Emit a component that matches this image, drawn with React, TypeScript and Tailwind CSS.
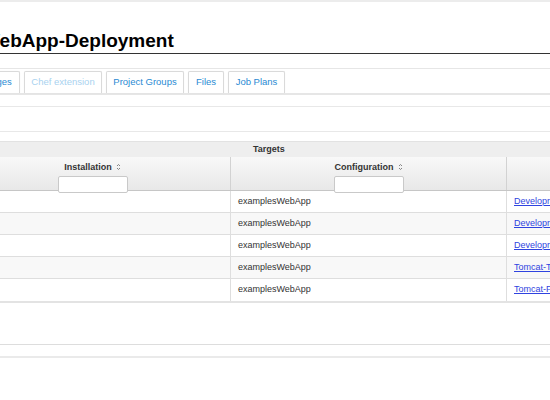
import React from "react";

type Row = {
  configuration: string;
  target: string;
};

const rows: Row[] = [
  { configuration: "examplesWebApp", target: "Development-Server-1" },
  { configuration: "examplesWebApp", target: "Development-Server-2" },
  { configuration: "examplesWebApp", target: "Development-Server-3" },
  { configuration: "examplesWebApp", target: "Tomcat-Test" },
  { configuration: "examplesWebApp", target: "Tomcat-Production" },
];

const tabs = [
  { label: "Stages", width: "w-[46px]", disabled: false },
  { label: "Chef extension", width: "w-[78px]", disabled: true },
  { label: "Project Groups", width: "w-[78px]", disabled: false },
  { label: "Files", width: "w-[36px]", disabled: false },
  { label: "Job Plans", width: "w-[57px]", disabled: false },
];

function SortIcon() {
  return (
    <svg width="5" height="8" viewBox="0 0 5 8" className="ml-[4px] inline-block">
      <path d="M1 3 L2.5 1.5 L4 3" fill="none" stroke="#777" strokeWidth="0.9" />
      <path d="M1 5 L2.5 6.5 L4 5" fill="none" stroke="#777" strokeWidth="0.9" />
    </svg>
  );
}

function HeaderCell({ title, className }: { title: string; className: string }) {
  return (
    <div className={`flex flex-col items-center pt-[5px] ${className}`}>
      <div className="flex items-center text-[9px] font-bold leading-[10px] text-[#333]">
        {title}
        <SortIcon />
      </div>
      <input
        type="text"
        className="mt-[4px] h-[17px] w-[70px] rounded-[2px] border border-[#c9c9c9] bg-white"
      />
    </div>
  );
}

export default function App() {
  return (
    <div className="h-[400px] w-[550px] overflow-hidden bg-white font-['Liberation_Sans',Arial,sans-serif]">
      <div className="h-[2px] bg-[#ececec]" />

      <div className="flex h-[52px] items-end border-b border-[#333] pb-[3px]">
        <h1 className="-ml-[18px] whitespace-nowrap text-[19px] font-bold leading-[19px] text-black">
          WebApp-Deployment
        </h1>
      </div>

      <div className="mt-[14px] border-t border-b-2 border-[#e6e6e6] pt-[2px]">
        <div className="-ml-[26px] flex gap-[4px]">
          {tabs.map((tab) => (
            <div
              key={tab.label}
              className={`flex h-[22px] shrink-0 items-center justify-center rounded-t-[2px] border border-b-0 border-[#dadada] bg-white text-[9.5px] whitespace-nowrap shadow-[0_0_1px_rgba(0,0,0,0.08)] ${tab.width} ${
                tab.disabled ? "text-[#a9d2ef]" : "text-[#2a8ad3]"
              }`}
            >
              {tab.label}
            </div>
          ))}
        </div>
      </div>

      <div className="mt-[11px] h-[26px] border-y border-[#e8e8e8]" />

      <div className="mt-[9px]">
        <div className="flex h-[16px] items-center border-t border-[#e2e2e2] bg-[#eeeeee] pl-[253px] text-[9px] font-bold text-[#333]">
          Targets
        </div>

        <div className="-ml-[45px]">
          <div className="flex h-[34px] border-b border-[#c6c6c6] bg-gradient-to-b from-[#f8f8f8] to-[#e8e8e8]">
            <HeaderCell title="Installation" className="w-[276px] shrink-0 border-r border-[#d2d2d2]" />
            <HeaderCell title="Configuration" className="w-[276px] shrink-0 border-r border-[#d2d2d2]" />
            <div className="flex-1" />
          </div>

          {rows.map((row, i) => (
            <div
              key={row.target}
              className={`flex text-[9px] text-[#333] ${
                i % 2 === 1 ? "bg-[#f8f8f8]" : "bg-white"
              } ${
                i === rows.length - 1
                  ? "h-[24px] border-b-2 border-[#e3e3e3]"
                  : "h-[22px] border-b border-[#dedede]"
              }`}
            >
              <div className="w-[276px] shrink-0 border-r border-[#dedede]" />
              <div className="flex w-[276px] shrink-0 items-center border-r border-[#dedede] pl-[7px]">
                {row.configuration}
              </div>
              <div className="flex items-center pl-[7px] whitespace-nowrap">
                <a href="#" className="text-[#2f43e0] underline">
                  {row.target}
                </a>
              </div>
            </div>
          ))}
        </div>
      </div>

      <div className="mt-[41px] border-t border-[#dddddd]" />
      <div className="mt-[11px] h-[2px] bg-[#eaeaea]" />
    </div>
  );
}
